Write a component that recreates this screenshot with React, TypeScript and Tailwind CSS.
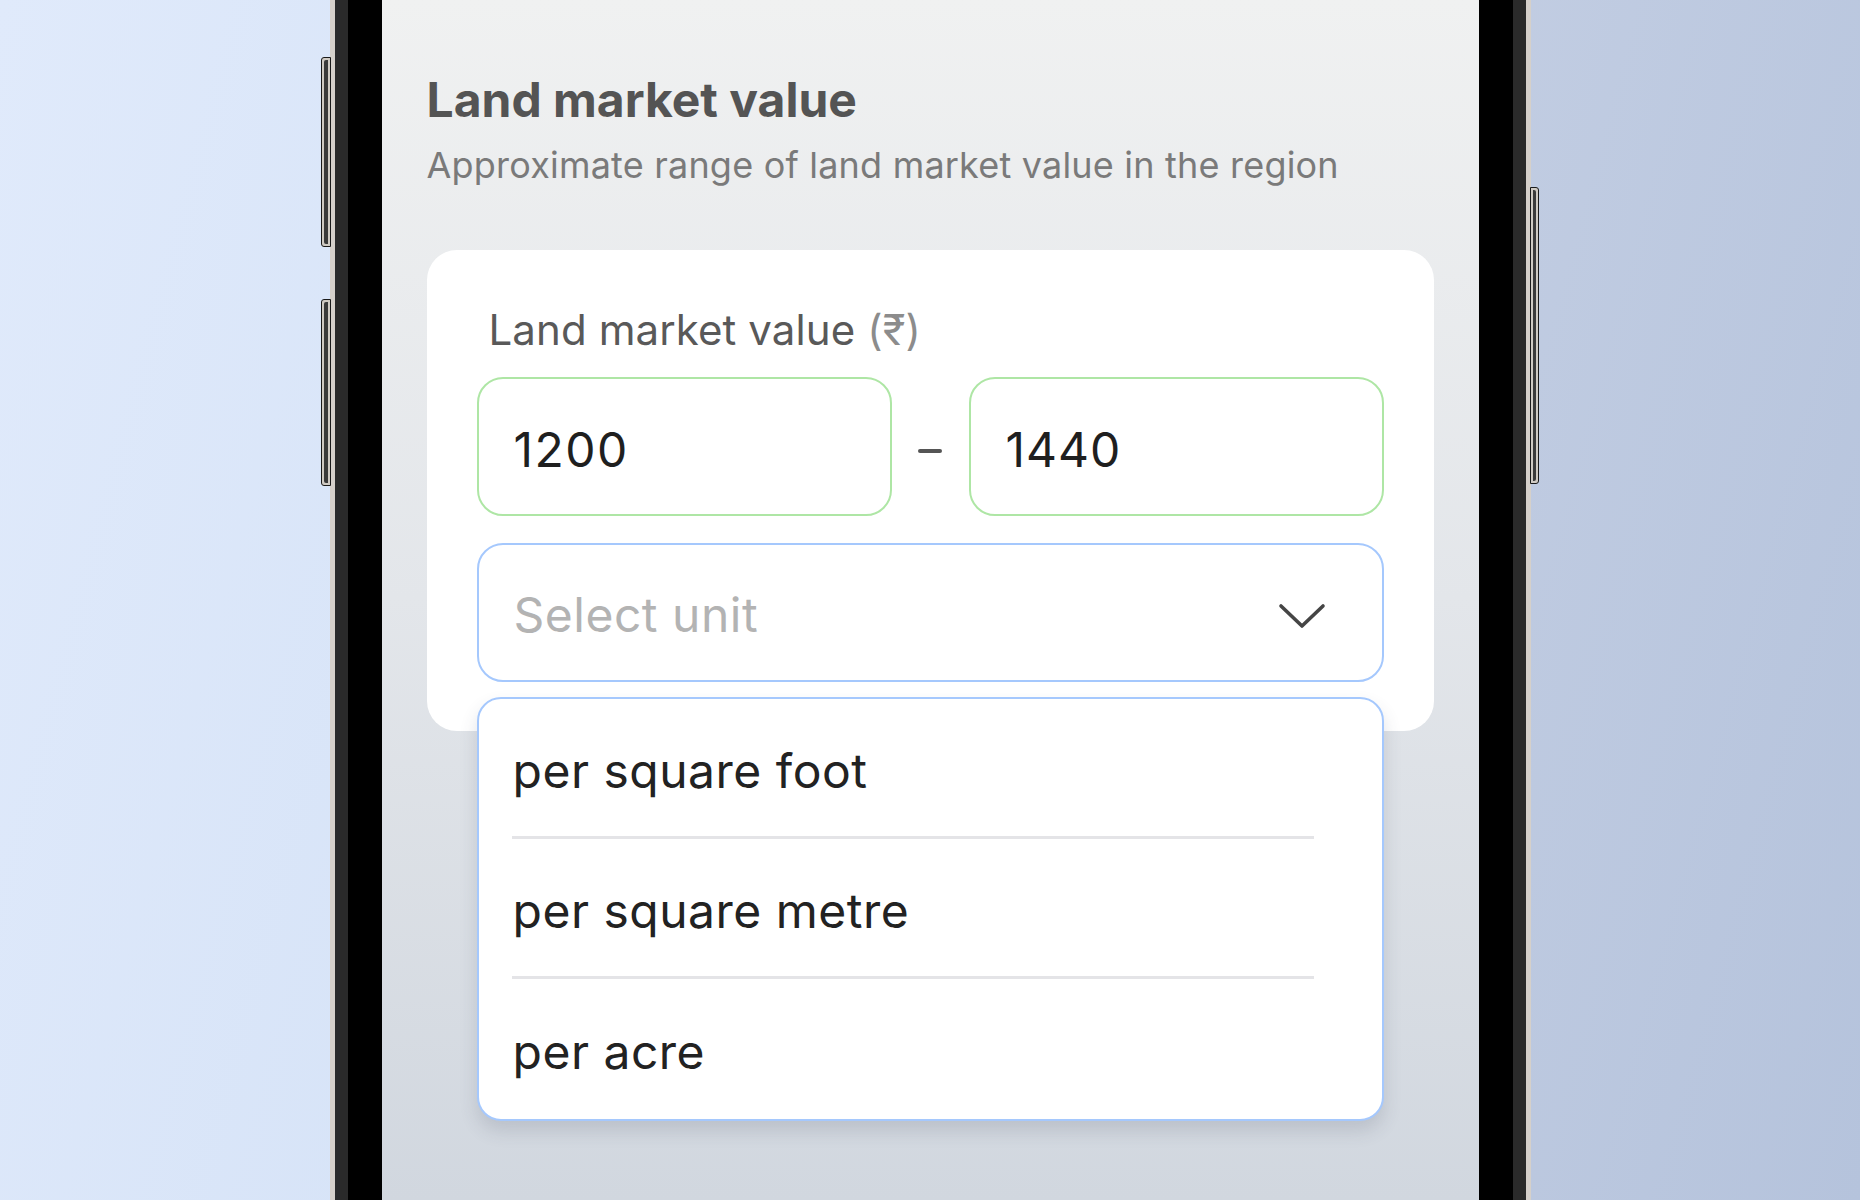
const units = ['per square foot', 'per square metre', 'per acre'];

export default function App() {
  return (
    <div className="h-[1200px] w-full overflow-hidden bg-[linear-gradient(105deg,#e0eafb_0%,#d6e3f7_35%,#c3cee3_65%,#b5c3dc_100%)] flex justify-center font-['Inter','Noto_Sans','DejaVu_Sans',sans-serif]">
      <div className="relative w-[1201px] h-[1200px] shrink-0">
        {/* side buttons */}
        <div className="absolute left-[-9px] top-[57px] h-[190px] w-[10px] rounded-l-[3px] border border-[#1a1a1a] bg-[#cfcac3] p-[2px]">
          <div className="h-full w-full rounded-l-[2px] bg-[#3a3a3a]" />
        </div>
        <div className="absolute left-[-9px] top-[299px] h-[187px] w-[10px] rounded-l-[3px] border border-[#1a1a1a] bg-[#cfcac3] p-[2px]">
          <div className="h-full w-full rounded-l-[2px] bg-[#3a3a3a]" />
        </div>
        <div className="absolute right-[-8px] top-[187px] h-[297px] w-[9px] rounded-r-[3px] border border-[#1a1a1a] bg-[#cfcac3] p-[2px]">
          <div className="h-full w-full rounded-r-[2px] bg-[#3a3a3a]" />
        </div>

        {/* frame */}
        <div className="h-full bg-[#d5d0ca] px-[5px]">
          <div className="h-full bg-[#2a2a2a] px-[13px]">
            <div className="h-full bg-black px-[34px]">
              {/* screen */}
              <div className="h-full overflow-hidden bg-linear-to-b from-[#f0f1f1] via-[#e3e6ea] to-[#d1d7df] px-[45px] pt-[71px]">
                <h1 className="text-[48px] leading-[58px] font-bold text-[#545454]">
                  Land market value
                </h1>
                <p className="mt-[15px] text-[36px] leading-[42px] text-[#7a7a7a] tracking-[0.2px]">
                  Approximate range of land market value in the region
                </p>

                {/* card */}
                <div className="mt-[64px] rounded-[30px] bg-white px-[50px] pt-[55px] pb-[49px]">
                  <div className="pl-[12px] text-[42px] leading-[50px] text-[#595959] tracking-[0.1px]">
                    Land market value <span className="text-[#8c8c8c]">(₹)</span>
                  </div>

                  <div className="mt-[22px] flex items-center">
                    <div className="flex h-[139px] w-[415px] items-center rounded-[26px] border-2 border-[#aee6a5] px-[35px] pt-[6px] text-[48px] leading-none text-[#1f1f1f] tracking-[1.5px]">
                      1200
                    </div>
                    <div className="flex flex-1 justify-center pt-[8px]">
                      <div className="h-[4px] w-[24px] rounded-full bg-[#555555]" />
                    </div>
                    <div className="flex h-[139px] w-[415px] items-center rounded-[26px] border-2 border-[#aee6a5] px-[35px] pt-[6px] text-[48px] leading-none text-[#1f1f1f] tracking-[1px]">
                      1440
                    </div>
                  </div>

                  <div className="relative mt-[27px]">
                    <div className="flex h-[139px] items-center justify-between rounded-[26px] border-2 border-[#a5c8fd] pl-[35px] pr-[55px] pt-[4px] text-[48px] leading-none text-[#b3b3b3] tracking-[0.5px]">
                      <span>Select unit</span>
                      <svg width="50" height="28" viewBox="0 0 50 28" fill="none" className="mt-[2px]">
                        <path d="M4 4 L25 24 L46 4" stroke="#454545" strokeWidth="3.6" strokeLinecap="round" strokeLinejoin="round" />
                      </svg>
                    </div>

                    {/* dropdown menu */}
                    <div className="absolute left-0 right-0 top-[calc(100%+15px)] z-10 rounded-[24px] border-2 border-[#a5c8fd] bg-white shadow-[0_10px_18px_rgba(60,70,90,0.16)]">
                      {units.map((u, i) => (
                        <div key={u} className="flex h-[140px] flex-col justify-center">
                          <div className="flex flex-1 items-center pl-[34px] pt-[6px] text-[48px] leading-none text-[#222222] tracking-[0.5px]">
                            {u}
                          </div>
                          {i < units.length - 1 && (
                            <div className="ml-[33px] mr-[68px] h-[3px] bg-[#e4e4e7]" />
                          )}
                        </div>
                      ))}
                    </div>
                  </div>
                </div>
              </div>
            </div>
          </div>
        </div>
      </div>
    </div>
  );
}
